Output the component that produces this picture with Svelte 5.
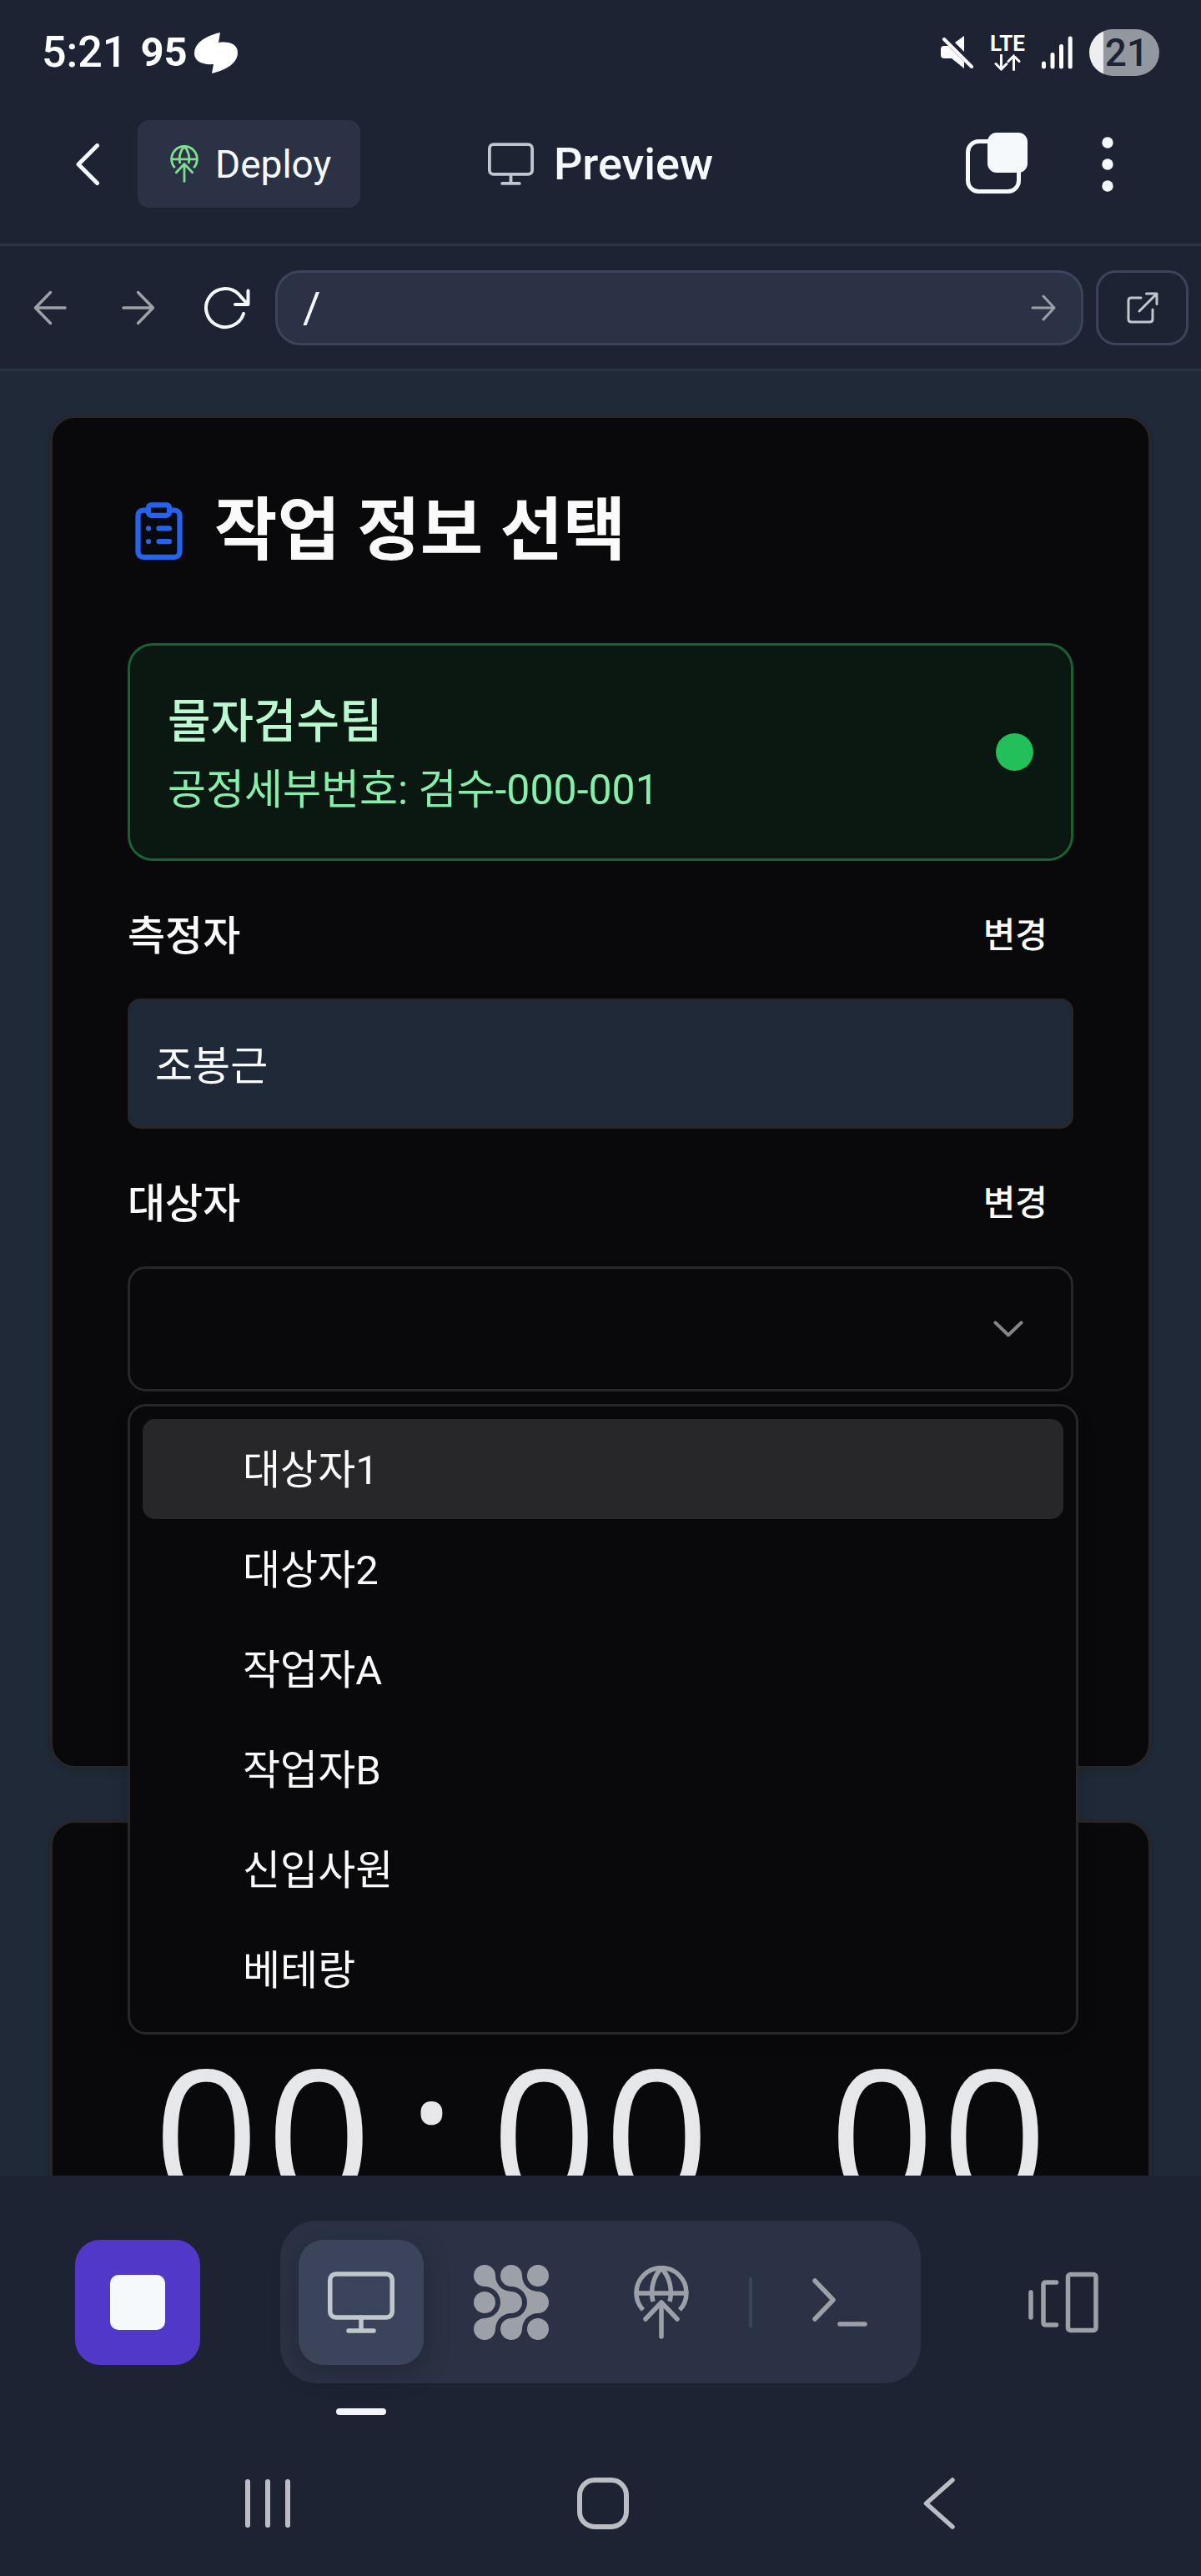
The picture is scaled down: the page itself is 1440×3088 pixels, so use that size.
<script>
  const people = ['대상자1', '대상자2', '작업자A', '작업자B', '신입사원', '베테랑'];
  const clock = [...'00:00.00'];

  let path = $state('/');
  let measurer = $state('조봉근');
  let target = $state('');
  let highlighted = $state('대상자1');
</script>

{#snippet monitor(size)}
  <svg class="icon" width={size} height={size} viewBox="0 0 80 80" fill="none" stroke="currentColor" stroke-width="5.5" stroke-linecap="round" aria-hidden="true">
    <rect x="2.75" y="6" width="74.5" height="52" rx="7" />
    <path d="M40 58v15M25 74h30" />
  </svg>
{/snippet}

{#snippet globe(width, height)}
  <svg class="icon" {width} {height} viewBox="0 0 66 88" fill="none" stroke="currentColor" stroke-width="5.5" aria-hidden="true">
    <path d="M11 53A30 30 0 1 1 55 53M3 33h60M33 3C24 12 19 28 23 43M33 3c9 9 14 25 10 40" />
    <path d="M33 85V45M14 64l19-20 19 20" stroke-linecap="round" stroke-linejoin="round" />
  </svg>
{/snippet}

<div class="app">
  <div class="status">
    <span class="time">5:21</span>
    <span class="temp">95</span>
    <svg class="icon" width="52" height="49" viewBox="0 0 52 49" fill="currentColor" aria-hidden="true">
      <path d="M31 0L29 12C42 10 52 14 52 24C52 37 38 45 21 49L23 38C10 39 0 35 0 25C0 12 14 4 31 0Z" />
    </svg>
    <div class="signals">
      <svg class="icon" width="39" height="40" viewBox="0 0 39 40" fill="currentColor" aria-hidden="true">
        <path d="M28 0V19L17 8ZM4 12H9L28 31V39L13 27H4Q0 27 0 23V16Q0 12 4 12Z" />
        <path d="M4 4L37 37" stroke="currentColor" stroke-width="4" stroke-linecap="round" />
      </svg>
      <div class="lte">
        <span>LTE</span>
        <svg class="icon" width="32" height="20" viewBox="0 0 32 20" fill="none" stroke="currentColor" stroke-width="3" stroke-linecap="round" aria-hidden="true">
          <path d="M8.500 1v17M2 11.500l6.500 6.500 6.500-6.500M23.500 18.500V2M17 8.500L23.500 2 30 8.500" />
        </svg>
      </div>
      <svg class="icon" width="37" height="40" viewBox="0 0 37 40" fill="none" stroke="currentColor" stroke-width="5" stroke-linecap="round" aria-hidden="true">
        <path d="M2.500 33v4M13 22.500V37M23.500 12.500V37M34.200 3v34" />
      </svg>
      <span class="battery">21</span>
    </div>
  </div>

  <header class="header">
    <div class="left">
      <button class="plain back" aria-label="Back">
        <svg class="icon" width="30" height="52" viewBox="0 0 30 52" fill="none" stroke="currentColor" stroke-width="5" stroke-linecap="round" stroke-linejoin="round" aria-hidden="true">
          <path d="M26.500 3.500L4 26l22.500 22.500" />
        </svg>
      </button>
      <button class="deploy">
        <span class="green">{@render globe(34, 45)}</span>
        Deploy
      </button>
    </div>
    <h1 class="title">
      <span class="soft">{@render monitor(55)}</span>
      Preview
    </h1>
    <div class="right">
      <button class="plain" aria-label="Tabs">
        <svg class="icon" width="74" height="76" viewBox="0 0 74 76" fill="none" aria-hidden="true">
          <rect x="2.500" y="10.500" width="61" height="60" rx="13" stroke="currentColor" stroke-width="5" />
          <rect x="26" y="0" width="48" height="48" rx="11" fill="currentColor" />
        </svg>
      </button>
      <button class="plain menu" aria-label="More options">
        <svg class="icon" width="14" height="66" viewBox="0 0 14 66" fill="currentColor" aria-hidden="true">
          <circle cx="7" cy="7" r="6.700" /><circle cx="7" cy="33" r="6.700" /><circle cx="7" cy="59" r="6.700" />
        </svg>
      </button>
    </div>
  </header>

  <nav class="address" aria-label="Browser">
    <div class="history">
      <button class="plain step dim" aria-label="Go back">
        <svg class="icon" width="40" height="42" viewBox="0 0 40 42" fill="none" stroke="currentColor" stroke-width="3.500" stroke-linecap="round" stroke-linejoin="round" aria-hidden="true">
          <path d="M20.500 2.500L2.500 21l18 18.500M3 21h35" />
        </svg>
      </button>
      <button class="plain step dim" aria-label="Go forward">
        <svg class="icon" width="40" height="42" viewBox="0 0 40 42" fill="none" stroke="currentColor" stroke-width="3.500" stroke-linecap="round" stroke-linejoin="round" aria-hidden="true">
          <path d="M19.500 2.500L37.500 21l-18 18.500M37 21H2" />
        </svg>
      </button>
      <button class="plain step" aria-label="Reload">
        <svg class="icon" width="56" height="54" viewBox="0 0 56 54" fill="none" stroke="currentColor" stroke-width="4" stroke-linecap="round" stroke-linejoin="round" aria-hidden="true">
          <path d="M48 34A23 23 0 1 1 42 10.500L53 23M53.500 6.500V23H38" />
        </svg>
      </button>
    </div>
    <form class="url" onsubmit={(e) => e.preventDefault()}>
      <input type="text" aria-label="Path" bind:value={path} />
      <button class="plain dim" aria-label="Go">
        <svg class="icon" width="30" height="32" viewBox="0 0 30 32" fill="none" stroke="currentColor" stroke-width="3" stroke-linecap="round" stroke-linejoin="round" aria-hidden="true">
          <path d="M15 2l13 14-13 14M27 16H2" />
        </svg>
      </button>
    </form>
    <button class="external" aria-label="Open in new tab">
      <svg class="icon" width="38" height="38" viewBox="0 0 38 38" fill="none" stroke="currentColor" stroke-width="3" stroke-linecap="round" stroke-linejoin="round" aria-hidden="true">
        <path d="M17 7H5.500Q2 7 2 10.500V32.500Q2 36 5.500 36H27.500Q31 36 31 32.500V21M23.500 2H36V14.500M35.500 2.500L15 23" />
      </svg>
    </button>
  </nav>

  <main class="page">
    <section class="card info">
      <h2>
        <svg class="icon" width="75" height="75" viewBox="0 0 24 24" fill="none" stroke="#2563eb" stroke-width="2" stroke-linecap="round" stroke-linejoin="round" aria-hidden="true">
          <rect width="8" height="4" x="8" y="2" rx="1" ry="1" />
          <path d="M16 4h2a2 2 0 0 1 2 2v14a2 2 0 0 1-2 2H6a2 2 0 0 1-2-2V6a2 2 0 0 1 2-2h2M12 11h4M12 16h4M8 11h.01M8 16h.01" />
        </svg>
        작업 정보 선택
      </h2>

      <div class="team">
        <div>
          <p class="name">물자검수팀</p>
          <p class="code">공정세부번호: 검수-000-001</p>
        </div>
        <span class="dot"></span>
      </div>

      <div class="row">
        <label for="measurer">측정자</label>
        <button class="plain change">변경</button>
      </div>
      <input id="measurer" class="field" type="text" readonly value={measurer} />

      <div class="row">
        <label for="target">대상자</label>
        <button class="plain change">변경</button>
      </div>
      <div class="picker">
        <select id="target" bind:value={target}>
          <option value=""></option>
          {#each people as person}
            <option value={person}>{person}</option>
          {/each}
        </select>
        <svg class="icon chevron" width="36" height="20" viewBox="0 0 36 20" fill="none" stroke="currentColor" stroke-width="4" stroke-linecap="round" stroke-linejoin="round" aria-hidden="true">
          <path d="M2.500 2.500L18 17.500 33.500 2.500" />
        </svg>
        <div class="list" role="listbox" aria-label="대상자">
          {#each people as person}
            <button
              class="option"
              class:active={person === highlighted}
              role="option"
              aria-selected={person === target}
              onmouseenter={() => (highlighted = person)}
              onclick={() => (target = person)}>{person}</button>
          {/each}
        </div>
      </div>
    </section>

    <section class="card timer">
      <div class="clock" role="timer">
        {#each clock as char}<span>{char}</span>{/each}
      </div>
    </section>
  </main>

  <footer>
    <div class="toolbar">
      <button class="tool stop" aria-label="Stop"><span></span></button>
      <div class="group">
        <button class="tool current" aria-label="Preview">{@render monitor(80)}</button>
        <button class="tool" aria-label="Agent">
          <svg class="icon" width="90" height="90" viewBox="0 0 90 90" fill="currentColor" aria-hidden="true">
            <path d="M26 13A19 19 0 0 0 45 32A13 13 0 0 1 45 58A19 19 0 0 0 26 77A13 13 0 1 1 13 64A19 19 0 0 0 13 26A13 13 0 1 1 26 13Z" />
            <path d="M58 13A19 19 0 0 0 77 32A13 13 0 0 1 77 58A19 19 0 0 0 58 77A13 13 0 1 1 45 64A19 19 0 0 0 45 26A13 13 0 1 1 58 13Z" />
            <circle cx="13" cy="45" r="13" /><circle cx="77" cy="13" r="13" /><circle cx="77" cy="77" r="13" />
          </svg>
        </button>
        <button class="tool" aria-label="Deployments">{@render globe(66, 88)}</button>
        <span class="divider"></span>
        <button class="tool" aria-label="Shell">
          <svg class="icon" width="66" height="60" viewBox="0 0 66 60" fill="none" stroke="currentColor" stroke-width="5.500" stroke-linecap="round" stroke-linejoin="round" aria-hidden="true">
            <path d="M3 4l22 23L3 50M33 56h30" />
          </svg>
        </button>
      </div>
      <button class="tool" aria-label="All tabs">
        <svg class="icon" width="84" height="74" viewBox="0 0 84 74" fill="none" stroke="currentColor" stroke-width="5.500" stroke-linecap="round" stroke-linejoin="round" aria-hidden="true">
          <rect x="47.500" y="3.500" width="33.500" height="67" rx="3" />
          <path d="M33.500 13H21q-3 0-3 3v45q0 3 3 3h12.500M3 25v30" />
        </svg>
      </button>
    </div>
    <div class="system">
      <button class="plain" aria-label="Recent apps">
        <svg class="icon" width="54" height="60" viewBox="0 0 54 60" fill="none" stroke="currentColor" stroke-width="6" stroke-linecap="round" aria-hidden="true">
          <path d="M3 4v52M27 4v52M51 4v52" />
        </svg>
      </button>
      <button class="plain" aria-label="Home">
        <svg class="icon" width="62" height="62" viewBox="0 0 62 62" fill="none" stroke="currentColor" stroke-width="6" aria-hidden="true">
          <rect x="3" y="3" width="56" height="56" rx="18" />
        </svg>
      </button>
      <button class="plain" aria-label="System back">
        <svg class="icon" width="38" height="62" viewBox="0 0 38 62" fill="none" stroke="currentColor" stroke-width="5.500" stroke-linecap="round" stroke-linejoin="round" aria-hidden="true">
          <path d="M35 3L3.500 31l31.500 28" />
        </svg>
      </button>
    </div>
  </footer>
</div>

<style>
  :global(body) {
    margin: 0;
    background: #1d2332;
  }

  .app {
    display: flex;
    flex-direction: column;
    height: 100vh;
    box-sizing: border-box;
    background: #1d2332;
    color: #f5f9fc;
    font-family: Roboto, 'Noto Sans CJK KR', sans-serif;
    font-size: 49px;
  }

  .app :global(*) {
    box-sizing: border-box;
  }

  button,
  input,
  select {
    font: inherit;
    color: inherit;
    margin: 0;
  }

  button {
    cursor: pointer;
  }

  .icon {
    display: block;
    flex: none;
  }

  .plain {
    display: flex;
    align-items: center;
    justify-content: center;
    padding: 0;
    border: 0;
    background: none;
  }

  .dim {
    color: #9ba1a6;
  }

  .soft {
    color: #c1c8cd;
  }

  .green {
    color: #7ee08f;
  }

  /* Status bar */
  .status {
    display: flex;
    align-items: center;
    height: 126px;
    padding: 0 50px;
    color: #fff;
    font-weight: 500;
  }

  .time {
    font-size: 52px;
    line-height: 60px;
  }

  .temp {
    margin: 0 8px 0 16px;
    font-size: 49px;
    font-weight: 700;
    line-height: 60px;
  }

  .signals {
    display: flex;
    align-items: center;
    gap: 20px;
    margin-left: auto;
  }

  .lte {
    display: flex;
    flex-direction: column;
    align-items: center;
    gap: 2px;
    font-size: 26px;
    font-weight: 700;
    line-height: 22px;
  }

  .battery {
    width: 84px;
    padding-left: 6px;
    border-radius: 28px;
    background: linear-gradient(90deg, #eeeef0 17px, #93979f 17px);
    color: #1d2332;
    font-size: 46px;
    line-height: 56px;
    text-align: center;
  }

  /* App header */
  .header {
    display: grid;
    grid-template-columns: 1fr auto 1fr;
    align-items: center;
    padding: 18px 82px 43px;
    border-bottom: 3px solid #2b3245;
  }

  .left,
  .right {
    display: flex;
    align-items: center;
    gap: 37px;
  }

  .right {
    justify-content: flex-end;
    gap: 66px;
  }

  .back {
    width: 46px;
    height: 90px;
  }

  .menu {
    width: 60px;
    height: 90px;
  }

  .deploy {
    display: flex;
    align-items: center;
    gap: 20px;
    height: 105px;
    padding: 0 35px 0 39px;
    border: 0;
    border-radius: 14px;
    background: #2b3245;
    font-size: 46px;
  }

  .title {
    display: flex;
    align-items: center;
    gap: 24px;
    margin: 0;
    font-size: 54px;
    font-weight: 500;
    line-height: 60px;
  }

  /* Address bar */
  .address {
    display: flex;
    align-items: center;
    gap: 15px;
    padding: 29px 15px 28px 30px;
    border-bottom: 3px solid #2b3245;
  }

  .history {
    display: flex;
    gap: 46px;
    padding-right: 13px;
  }

  .step {
    width: 60px;
    height: 90px;
  }

  .url {
    display: flex;
    flex: 1;
    align-items: center;
    height: 90px;
    padding: 0 30px;
    border: 3px solid #3c445c;
    border-radius: 30px;
    background: #2b3245;
  }

  .url input {
    flex: 1;
    min-width: 0;
    padding: 0;
    border: 0;
    outline: 0;
    background: none;
    font-size: 52px;
  }

  .external {
    display: flex;
    align-items: center;
    justify-content: center;
    width: 111px;
    height: 90px;
    padding: 0;
    border: 3px solid #3c445c;
    border-radius: 24px;
    background: none;
    color: #c1c8cd;
  }

  /* Previewed page */
  .page {
    display: flex;
    flex: 1;
    flex-direction: column;
    gap: 62px;
    min-height: 0;
    padding: 53px 60px 0;
    overflow: hidden;
    background: #1f2937;
    color: #fafafa;
  }

  .card {
    flex: none;
    padding: 87px 90px;
    border: 3px solid #27272a;
    border-radius: 30px;
    background: #09090b;
    box-shadow: 0 4px 8px rgb(0 0 0 / 8%);
  }

  .info {
    padding-bottom: 449px;
  }

  h2 {
    display: flex;
    align-items: center;
    gap: 29px;
    margin: 0 0 87px;
    font-size: 82px;
    font-weight: 700;
    line-height: 96px;
  }

  .team {
    display: flex;
    align-items: center;
    justify-content: space-between;
    height: 261px;
    padding: 8px 45px 0;
    border: 3px solid #1a6137;
    border-radius: 30px;
    background: #0b1711;
  }

  .team p {
    margin: 0;
    line-height: 82px;
  }

  .team .name {
    color: #bbf7d0;
    font-size: 56px;
    font-weight: 500;
  }

  .team .code {
    color: #86efac;
    font-size: 50px;
  }

  .dot {
    width: 45px;
    height: 45px;
    margin-bottom: 8px;
    border-radius: 50%;
    background: #22bf5b;
  }

  .row {
    display: flex;
    align-items: center;
    justify-content: space-between;
    height: 90px;
    margin: 40px 0 35px;
    font-weight: 500;
  }

  .change {
    height: 90px;
    padding: 0 31px;
    font-size: 42px;
    font-weight: 500;
  }

  .field {
    display: block;
    width: 100%;
    height: 156px;
    padding: 0 30px 4px;
    border: 3px solid #27272a;
    border-radius: 15px;
    outline: 0;
    background: #1f2937;
  }

  .picker {
    position: relative;
  }

  select {
    display: block;
    width: 100%;
    height: 150px;
    padding: 0 42px;
    border: 3px solid #27272a;
    border-radius: 22px;
    outline: 0;
    background: #09090b;
    appearance: none;
  }

  .chevron {
    position: absolute;
    top: 65px;
    right: 60px;
    color: #848485;
    pointer-events: none;
  }

  .list {
    position: absolute;
    z-index: 1;
    top: 100%;
    left: 0;
    right: -6px;
    margin-top: 15px;
    padding: 15px;
    border: 3px solid #27272a;
    border-radius: 22px;
    background: #09090b;
    box-shadow: 0 8px 20px rgb(0 0 0 / 12%);
  }

  .option {
    display: block;
    width: 100%;
    height: 120px;
    padding: 0 120px 8px;
    border: 0;
    border-radius: 15px;
    background: none;
    text-align: left;
  }

  .option.active {
    background: #27272a;
  }

  .timer {
    padding-top: 258px;
  }

  .clock {
    display: flex;
    justify-content: center;
    color: #e5e7eb;
    font-family: 'Open Sans', sans-serif;
    font-size: 222px;
    line-height: 225px;
  }

  .clock span {
    width: 135px;
    text-align: center;
  }

  /* Bottom toolbar */
  .toolbar {
    display: flex;
    align-items: center;
    justify-content: space-between;
    padding: 54px 90px 57px;
    color: #9ba1a6;
  }

  .tool {
    position: relative;
    display: flex;
    align-items: center;
    justify-content: center;
    width: 150px;
    height: 150px;
    padding: 0;
    border: 0;
    border-radius: 30px;
    background: none;
  }

  .stop {
    background: #5138c8;
  }

  .stop span {
    width: 66px;
    height: 66px;
    border-radius: 10px;
    background: #f5f9fc;
  }

  .group {
    display: flex;
    align-items: center;
    gap: 30px;
    height: 195px;
    padding: 0 22px;
    border-radius: 44px;
    background: #2b3245;
  }

  .current {
    background: #3c445c;
    box-shadow: 0 8px 30px rgb(20 24 38 / 40%);
    color: #c1c8cd;
  }

  .current::after {
    content: '';
    position: absolute;
    top: 100%;
    left: 50%;
    width: 60px;
    height: 8px;
    margin: 52px 0 0 -30px;
    border-radius: 4px;
    background: #f5f5ff;
  }

  .divider {
    width: 4px;
    height: 60px;
    background: #3c445c;
  }

  .system {
    display: grid;
    grid-template-columns: repeat(3, 1fr);
    height: 174px;
    padding: 0 113px 0 120px;
    color: #babdc4;
  }
</style>
